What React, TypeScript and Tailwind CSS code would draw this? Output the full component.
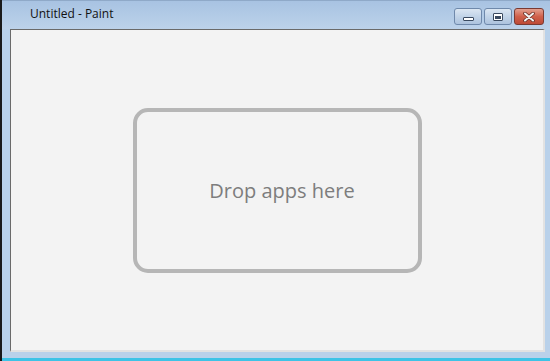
import React from 'react';

function CaptionButton({ kind }: { kind: 'min' | 'max' | 'close' }) {
  const base =
    kind === 'close'
      ? 'w-[30px] border-[#7a3a32] bg-gradient-to-b from-[#e2a090] via-[#d0604b] to-[#bd4a36]'
      : 'w-[28px] border-[#6f89ab] bg-gradient-to-b from-[#dbe6f2] via-[#c2d4e8] to-[#adc3de]';
  return (
    <div className={`h-[17px] rounded-[3px] border flex items-center justify-center ${base}`}>
      {kind === 'min' && (
        <div className="mt-[5px] w-[11px] h-[4px] rounded-[1px] border border-[#3a4a60] bg-white" />
      )}
      {kind === 'max' && (
        <div className="w-[10px] h-[8px] rounded-[1px] border border-[#3a4a60] bg-white flex items-center justify-center">
          <div className="w-[6px] h-[3px] mt-[1px] bg-[#3a4a60]" />
        </div>
      )}
      {kind === 'close' && (
        <svg width="12" height="10" viewBox="0 0 12 10">
          <path d="M2 1.5 L10 8.5 M10 1.5 L2 8.5" stroke="#6a2f26" strokeWidth="3.6" strokeLinecap="round" />
          <path d="M2 1.5 L10 8.5 M10 1.5 L2 8.5" stroke="#f4f4f4" strokeWidth="2" strokeLinecap="round" />
        </svg>
      )}
    </div>
  );
}

export default function App() {
  return (
    <div className="w-[550px] h-[361px] flex bg-black overflow-hidden">
      <div className="w-[2px] bg-[#1a1a1a]" />
      <div className="flex-1 flex flex-col">
        <div className="flex-1 flex flex-col bg-[#b9d1ea] border-t border-[#8fa9c8]">
          <div className="h-[28px] flex items-start justify-between bg-gradient-to-b from-[#a8c3e2] to-[#bcd2ea] pl-[28px] pr-[6px]">
            <span
              className="mt-[6px] text-[12px] text-[#111111] leading-[14px]"
              style={{ fontFamily: '"Open Sans", "Noto Sans", sans-serif' }}
            >
              Untitled - Paint
            </span>
            <div className="flex gap-[2px] mt-[7px]">
              <CaptionButton kind="min" />
              <CaptionButton kind="max" />
              <CaptionButton kind="close" />
            </div>
          </div>
          <div className="flex-1 flex pl-[8px] pr-[5px] pb-[6px]">
            <div className="flex-1 flex items-center justify-center bg-[#f3f3f3] border-t border-l border-t-[#6a6a6a] border-l-[#6a6a6a] border-b-2 border-r-2 border-b-[#e2e2e2] border-r-[#e2e2e2]">
              <div className="w-[289px] h-[165px] rounded-[15px] border-[4px] border-[#b6b6b6] flex items-center justify-center">
                <span
                  className="text-[20px] text-[#7d7d7d] pl-[10px] mt-[2px]"
                  style={{ fontFamily: '"Open Sans", "Noto Sans", sans-serif' }}
                >
                  Drop apps here
                </span>
              </div>
            </div>
          </div>
        </div>
        <div className="h-[3px] bg-[#3ec3e6]" />
      </div>
    </div>
  );
}
